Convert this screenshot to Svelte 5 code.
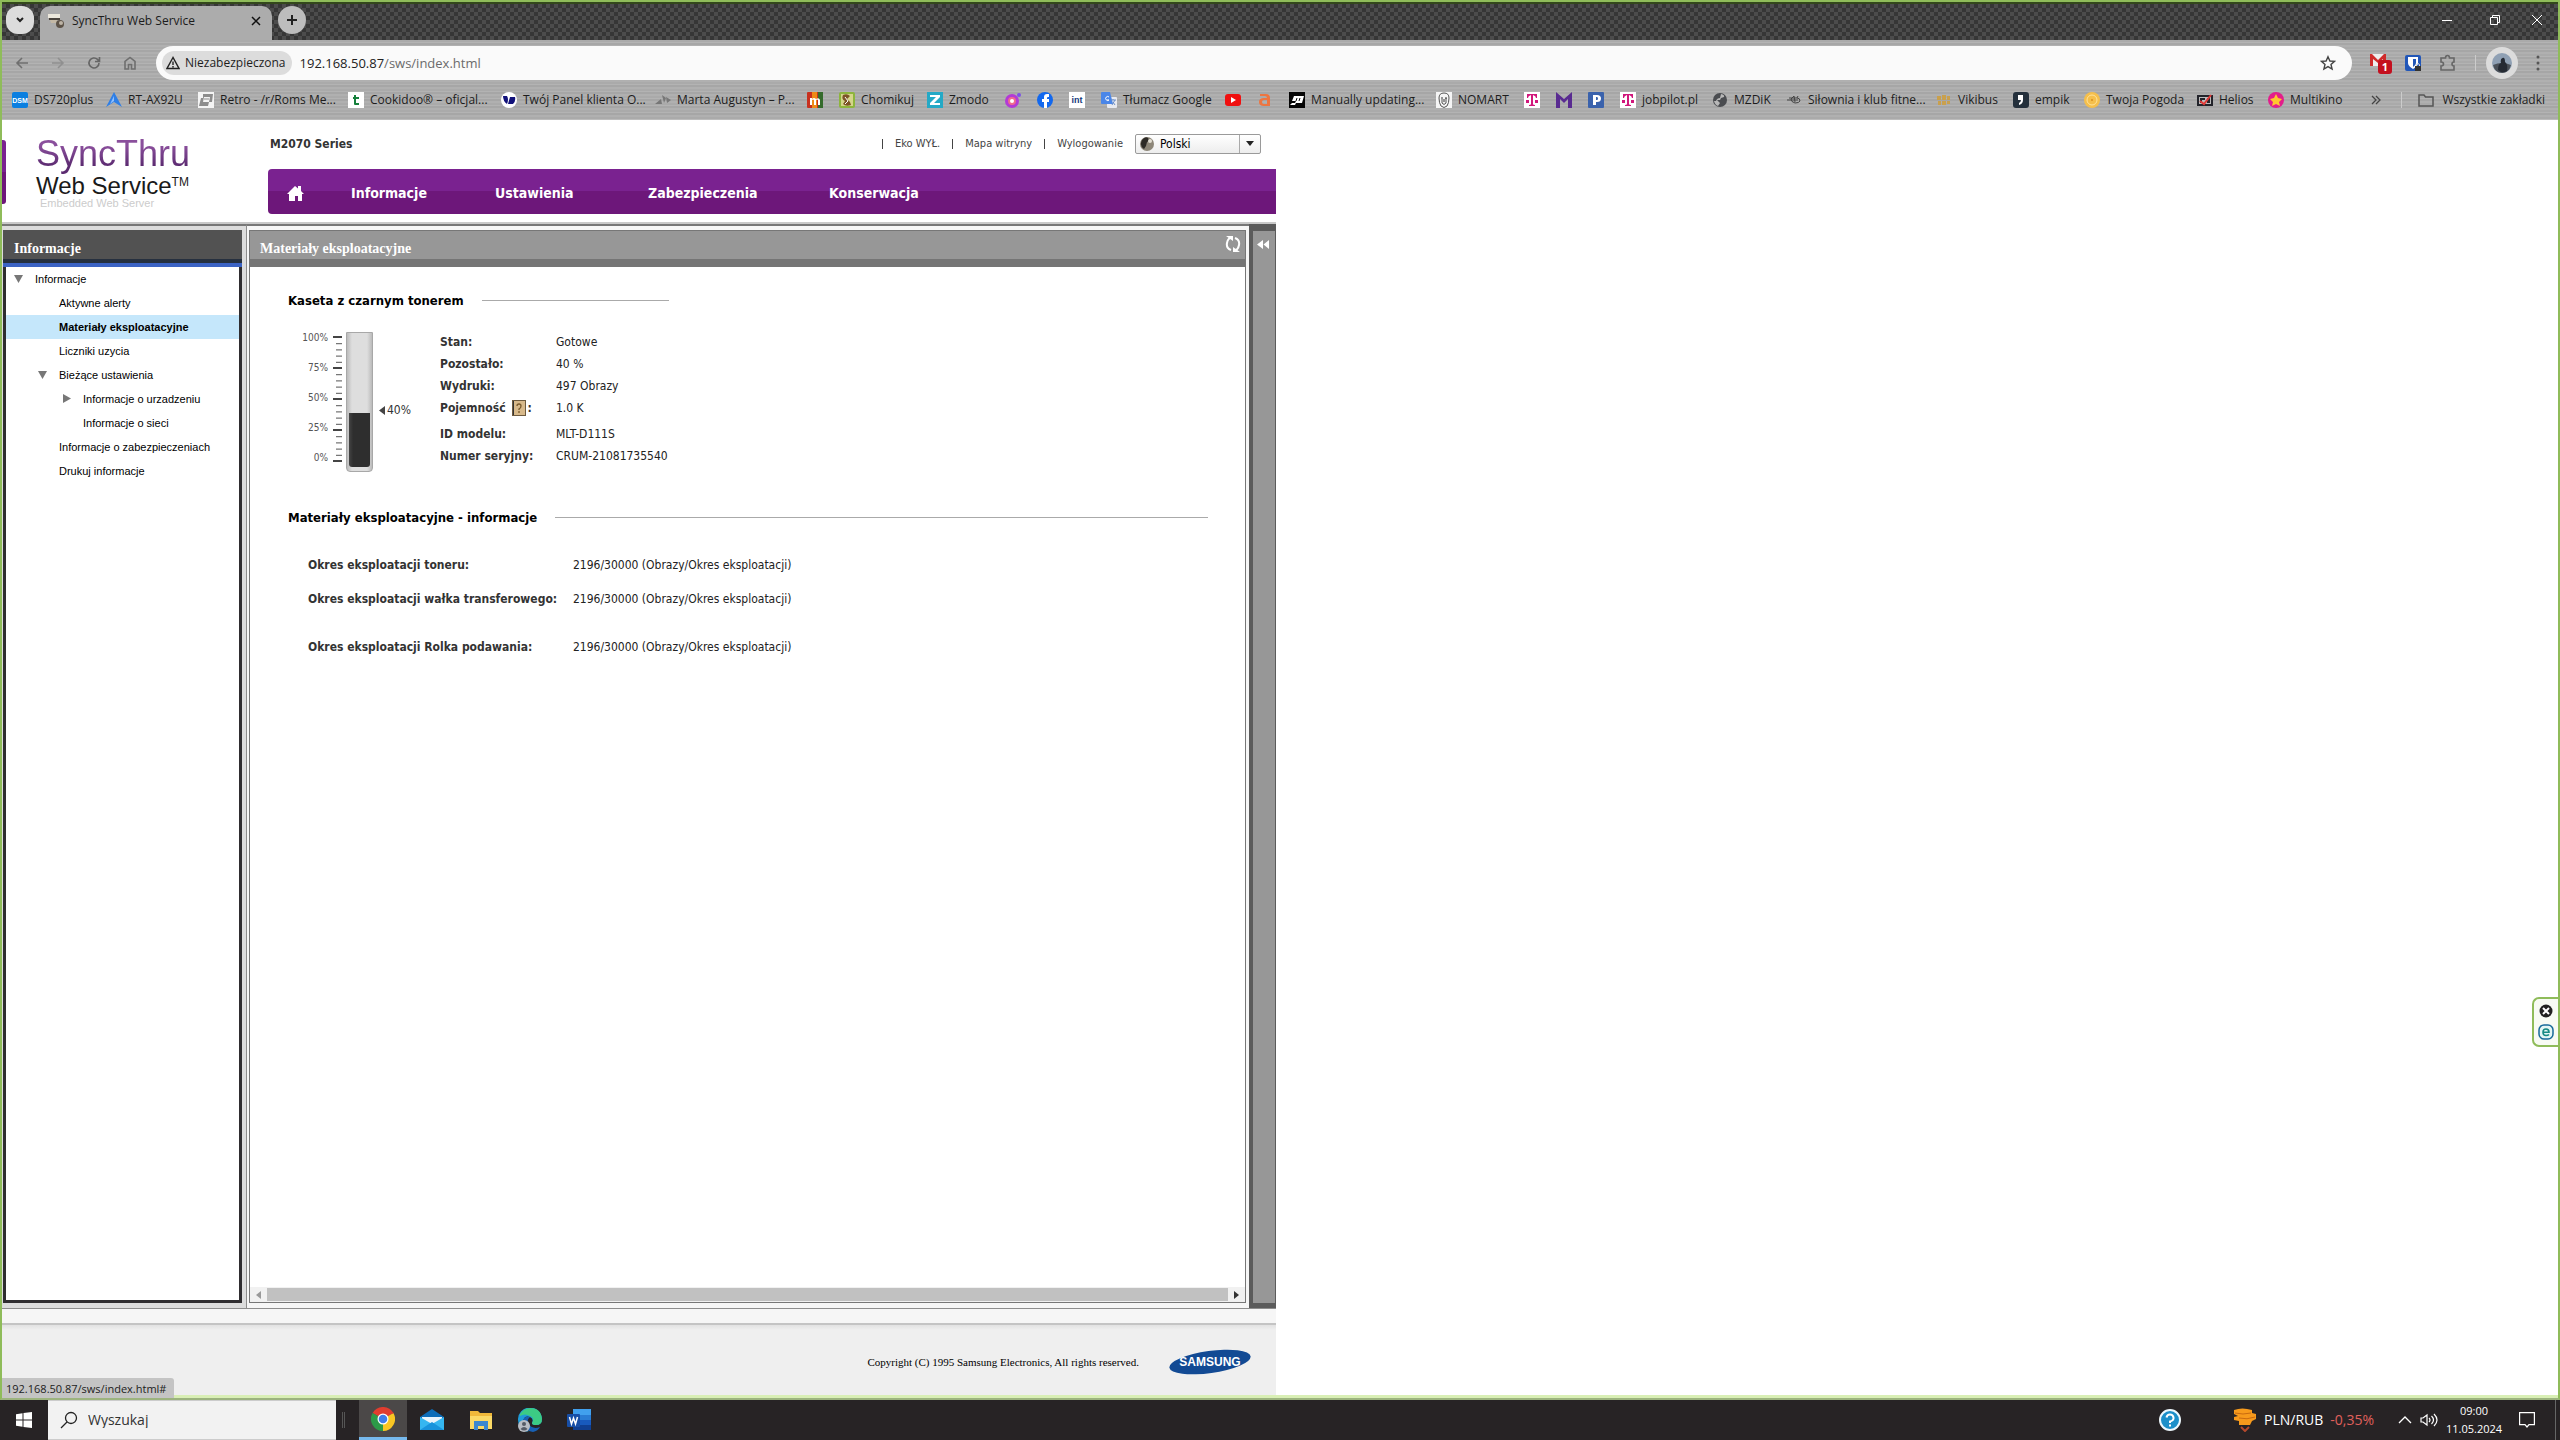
<script lang="ts">
    interface Bookmark {
        icon: string;
        label?: string;
        width?: number;
    }

    interface TreeItem {
        label: string;
        level: number;
        arrow?: "open" | "closed";
        active?: boolean;
    }

    const bookmarks: Bookmark[] = [
        { icon: "dsm", label: "DS720plus", width: 56 },
        { icon: "asus", label: "RT-AX92U", width: 54 },
        { icon: "retro", label: "Retro - /r/Roms Me...", width: 112 },
        { icon: "cookidoo", label: "Cookidoo® – oficjal...", width: 115 },
        { icon: "ovh", label: "Twój Panel klienta O...", width: 116 },
        { icon: "marta", label: "Marta Augustyn – P...", width: 114 },
        { icon: "m-red" },
        { icon: "chomik", label: "Chomikuj", width: 50 },
        { icon: "zmodo", label: "Zmodo", width: 40 },
        { icon: "insta" },
        { icon: "facebook" },
        { icon: "int" },
        { icon: "translate", label: "Tłumacz Google", width: 86 },
        { icon: "youtube" },
        { icon: "allegro" },
        { icon: "updating", label: "Manually updating...", width: 109 },
        { icon: "nomart", label: "NOMART", width: 50 },
        { icon: "telekom" },
        { icon: "m-violet" },
        { icon: "p-blue" },
        { icon: "telekom", label: "jobpilot.pl", width: 54 },
        { icon: "globe", label: "MZDiK", width: 36 },
        { icon: "gym", label: "Siłownia i klub fitne...", width: 112 },
        { icon: "vikibus", label: "Vikibus", width: 39 },
        { icon: "empik", label: "empik", width: 33 },
        { icon: "pogoda", label: "Twoja Pogoda", width: 75 },
        { icon: "helios", label: "Helios", width: 33 },
        { icon: "multikino", label: "Multikino", width: 50 },
    ];

    const tree: TreeItem[] = [
        { label: "Informacje", level: 0, arrow: "open" },
        { label: "Aktywne alerty", level: 1 },
        { label: "Materiały eksploatacyjne", level: 1, active: true },
        { label: "Liczniki uzycia", level: 1 },
        { label: "Bieżące ustawienia", level: 1, arrow: "open" },
        { label: "Informacje o urzadzeniu", level: 2, arrow: "closed" },
        { label: "Informacje o sieci", level: 2 },
        { label: "Informacje o zabezpieczeniach", level: 1 },
        { label: "Drukuj informacje", level: 1 },
    ];

    const toner = [
        { label: "Stan", value: "Gotowe" },
        { label: "Pozostało", value: "40 %" },
        { label: "Wydruki", value: "497 Obrazy" },
        { label: "Pojemność", value: "1.0 K", help: true },
        { label: "ID modelu", value: "MLT-D111S" },
        { label: "Numer seryjny", value: "CRUM-21081735540" },
    ];

    const supplies = [
        { label: "Okres eksploatacji toneru:" },
        { label: "Okres eksploatacji wałka transferowego:" },
        { label: "Okres eksploatacji Rolka podawania:", spaced: true },
    ];
    const lifespan = "2196/30000 (Obrazy/Okres eksploatacji)";

    const remaining = 40;
    const scale = [100, 75, 50, 25, 0];
    const ticks = Array.from({ length: 21 }, (_, i) => i);

    let language = $state("Polski");
    let query = $state("");
    let address = $state("192.168.50.87/sws/index.html");
</script>

{#snippet favicon(name: string)}
    <svg class="favicon" viewBox="0 0 16 16" aria-hidden="true">
        {#if name === "dsm"}
            <rect width="16" height="16" rx="2" fill="#0b7fe0" />
            <text x="8" y="11" font-size="7" font-weight="700" fill="#fff" text-anchor="middle">DSM</text>
        {:else if name === "asus"}
            <path d="M8 0 0 15l8-5 8 5z" fill="#2f7fe6" />
            <path d="M8 4 4 12l4-3z" fill="#8fc0ff" />
        {:else if name === "retro"}
            <rect width="16" height="16" fill="#f4f4f4" />
            <path d="M5 2h10l-1 8h-3l-1 4H1l2-8h2zM6 5l-1 5h6l1-5z" fill="#8d8d8d" fill-rule="evenodd" />
            <path d="M6 7h5" stroke="#8d8d8d" />
        {:else if name === "cookidoo"}
            <rect width="16" height="16" fill="#fff" />
            <path d="M6 3h2v2h3v2H8v4h3v2H7q-1 0-1-1V7H5V5h1z" fill="#16803c" />
        {:else if name === "ovh"}
            <circle cx="8" cy="8" r="8" fill="#fff" />
            <path d="M2 4h4q2 3 0 8Q2 9 2 4zM9 5h3l-3 7H7zM12 5h2q1 4-2 7h-3z" fill="#12127a" />
        {:else if name === "marta"}
            <path d="m0 12 6-5 1 5zM7 3l2 8 2-5zM11 5l5 3-4 3z" fill="#777" />
        {:else if name === "m-red"}
            <rect width="16" height="16" rx="1" fill="#c8301e" />
            <path d="M5 0h5v16H5z" fill="#ef8a16" />
            <path d="M11 0h5v16h-5z" fill="#356b2c" />
            <path d="M3 13V6h2v1q2-2 4 0 3-2 4 1v5h-2V8q-1-1-2 0v5H7V8Q6 7 5 8v5z" fill="#fff" />
        {:else if name === "chomik"}
            <rect width="16" height="16" rx="2" fill="#8db53c" />
            <path d="M2 2h12v12H2z" fill="#d4d58a" />
            <path d="M4 3q4-2 7 1l-3 3q3 2 4 6-5 2-8-1l2-3Q2 7 4 3z" fill="#7d5526" />
            <path d="m6 5 3 4-3 3" stroke="#fff" fill="none" />
        {:else if name === "zmodo"}
            <rect width="16" height="16" fill="#24a9c6" />
            <path d="M3 3h10v2l-6 6h6v2H3v-2l6-6H3z" fill="#fff" />
        {:else if name === "insta"}
            <circle cx="7" cy="9" r="7" fill="#b33ad6" />
            <circle cx="7" cy="9" r="4" fill="#f06b8e" />
            <circle cx="7" cy="9" r="2" fill="#fff" />
            <circle cx="14" cy="3" r="2" fill="#7b52e8" />
        {:else if name === "facebook"}
            <circle cx="8" cy="8" r="8" fill="#1268ee" />
            <path d="M7 16v-6H5V7h2V5q0-3 3-3h2v3h-1q-1 0-1 1v1h2v3h-2v6z" fill="#fff" />
        {:else if name === "int"}
            <rect width="16" height="16" fill="#fff" />
            <text x="8" y="11" font-size="9" font-weight="700" fill="#153a7c" text-anchor="middle">int</text>
        {:else if name === "translate"}
            <rect x="6" y="5" width="10" height="11" rx="1" fill="#e8eaf0" />
            <path d="M1 0h8l3 12H1q-1 0-1-1V1q0-1 1-1z" fill="#4a86e8" />
            <path d="M8 5a2 2 0 1 0 0 3H6" stroke="#fff" fill="none" />
            <path d="M10 8h5M12 7v1m-1 5 3-5m-2 2 2 3" stroke="#6d8fc7" fill="none" />
        {:else if name === "youtube"}
            <rect y="2" width="16" height="12" rx="3" fill="#f00f0f" />
            <path d="m6 5 5 3-5 3z" fill="#fff" />
        {:else if name === "allegro"}
            <path d="M3 2h6q4 0 4 4v8H7q-5 0-5-4t5-4h3q0-2-2-2H3zm7 6H7q-2 0-2 2t2 2h3z" fill="#ee7540" fill-rule="evenodd" />
        {:else if name === "updating"}
            <rect width="16" height="16" fill="#050505" />
            <path d="M5 4h10l-2 7H7l-1 2H1l2-2h3l1-2H3z" fill="#fff" />
            <path d="m8 6-1 3M11 6l-1 3" stroke="#050505" />
        {:else if name === "nomart"}
            <rect width="16" height="16" fill="#f5f5f5" />
            <path d="M3 6q0-5 5-5t5 5-2 8q-3 3-6 0-2-3-2-8zm3 1v4q2 3 4 0V6" fill="none" stroke="#555" />
            <path d="M5 6h2m2 0h2M8 7v3" stroke="#333" />
        {:else if name === "telekom"}
            <rect width="16" height="16" fill="#fff" />
            <path d="M3 2h10v4h-1q0-2-3-3v9q0 1 2 1v1H5v-1q2 0 2-1V3Q4 4 4 6H3zM2 8h3v3H2zM11 8h3v3h-3z" fill="#d1177c" />
        {:else if name === "m-violet"}
            <path d="M0 16V0l8 7 8-7v16h-4V7l-4 4-4-4v9z" fill="#592b91" />
        {:else if name === "p-blue"}
            <rect width="16" height="16" rx="1" fill="#3a62ac" />
            <path d="M5 13V3h4q4 0 4 3.500T9 10H8v3zm3-8v3h1q1 0 1-1.500T9 5z" fill="#fff" fill-rule="evenodd" />
        {:else if name === "globe"}
            <circle cx="8" cy="8" r="7" fill="#4a4c50" />
            <path d="M9 2q4 1 3 3l-3 1-1 2H5l3 3-2 3q-3-1-4-5h2q1-3 4-3z" fill="#b8b8b8" />
        {:else if name === "gym"}
            <path d="M1 8h11M3 6h8q3 0 3 3-1 2-5 2-4-1-4-4l3-3 1 6" fill="none" stroke="#444" />
            <path d="m11 6 1-2" stroke="#444" />
        {:else if name === "vikibus"}
            <path d="M1 4h4v4H1zM6 3h4v5H6zM11 4h3v4h-3zM2 9h3v4H2zM6 9h4v4H6zM11 9h3v3h-3z" fill="#c9a04d" />
        {:else if name === "empik"}
            <rect width="16" height="16" rx="3" fill="#24303c" />
            <path d="M5 3h5v5q0 4-4 5v-2q2-1 2-3H5z" fill="#fff" />
        {:else if name === "pogoda"}
            <circle cx="8" cy="8" r="8" fill="#f5bf4b" />
            <circle cx="8" cy="8" r="5" fill="none" stroke="#ffe39c" />
            <circle cx="8" cy="8" r="1" fill="#d98c20" />
        {:else if name === "helios"}
            <rect y="3" width="16" height="11" fill="#23242b" />
            <path d="M2 5h12v7H2z" fill="#bbb" />
            <path d="M3 6h5v2H5v3H3zM10 6h3v5h-3z" fill="#23242b" />
            <path d="m3 9 4 3 7-9" fill="none" stroke="#e23a38" stroke-width="2" />
        {:else if name === "multikino"}
            <circle cx="8" cy="8" r="8" fill="#e31d8b" />
            <path d="m8 2 2 4 4 1-3 3 1 4-4-2-4 2 1-4-3-3 4-1z" fill="#ffc72e" />
        {/if}
    </svg>
{/snippet}

<div class="screen">
    <div class="browser">
        <div class="tabstrip">
            <button class="round" aria-label="Szukaj kart">
                <svg viewBox="0 0 10 10" width="10" height="10"><path d="m2 3 3 3 3-3" fill="none" stroke="#222" stroke-width="2" /></svg>
            </button>
            <div class="tab">
                <svg viewBox="0 0 16 16" width="16" height="16" aria-hidden="true">
                    <path d="M0 1h12v4H0z" fill="#ece8dc" />
                    <path d="M1 5h11v2H1z" fill="#4a443d" />
                    <path d="M2 7h7v3H3z" fill="#c4b9a6" />
                    <circle cx="12" cy="11" r="4" fill="#5d5348" />
                    <circle cx="13" cy="10" r="2" fill="#bdb4a6" />
                </svg>
                <span class="tab-title">SyncThru Web Service</span>
                <button class="tab-close" aria-label="Zamknij kartę">
                    <svg viewBox="0 0 10 10" width="10" height="10"><path d="m1 1 8 8M9 1 1 9" stroke="#111" stroke-width="1.500" /></svg>
                </button>
            </div>
            <button class="round" aria-label="Nowa karta">
                <svg viewBox="0 0 12 12" width="12" height="12"><path d="M6 1v10M1 6h10" stroke="#222" stroke-width="2" /></svg>
            </button>
            <div class="window-buttons">
                <button aria-label="Minimalizuj"><svg viewBox="0 0 10 10" width="10" height="10"><path d="M0 5.500h10" stroke="#fff" /></svg></button>
                <button aria-label="Przywróć"><svg viewBox="0 0 10 10" width="10" height="10"><path d="M.5 2.500h7v7h-7zM2.500 2V.5h7v7H8" fill="none" stroke="#fff" /></svg></button>
                <button aria-label="Zamknij"><svg viewBox="0 0 10 10" width="10" height="10"><path d="m0 0 10 10M10 0 0 10" stroke="#fff" /></svg></button>
            </div>
        </div>

        <div class="chrome">
            <div class="toolbar">
                <div class="history">
                    <button aria-label="Wstecz"><svg viewBox="0 0 16 16" width="16" height="16"><path d="M14 8H3m5-5L3 8l5 5" fill="none" stroke="#6f6f6f" stroke-width="1.600" /></svg></button>
                    <button aria-label="Dalej"><svg viewBox="0 0 16 16" width="16" height="16"><path d="M2 8h11M8 3l5 5-5 5" fill="none" stroke="#909090" stroke-width="1.600" /></svg></button>
                    <button aria-label="Odśwież"><svg viewBox="0 0 16 16" width="16" height="16"><path d="M13 8a5 5 0 1 1-1.500-3.600L13 6M13.500 2v4.500H9" fill="none" stroke="#666" stroke-width="1.600" /></svg></button>
                    <button aria-label="Strona główna"><svg viewBox="0 0 16 16" width="16" height="16"><path d="M3 14V6.500L8 2.500l5 4V14H9.500V9.500h-3V14z" fill="none" stroke="#6f6f6f" stroke-width="1.600" /></svg></button>
                </div>
                <div class="omnibox">
                    <button class="chip">
                        <svg viewBox="0 0 14 14" width="14" height="14"><path d="M7 1.500 1 12.500h12zM7 5.500v3.500m0 1v1.500" fill="none" stroke="#222" stroke-width="1.400" /></svg>
                        Niezabezpieczona
                    </button>
                    <div class="url">
                        <span class="url-text" aria-hidden="true"><b>192.168.50.87</b>/sws/index.html</span>
                        <input aria-label="Pasek adresu" bind:value={address} />
                    </div>
                    <button class="plain" aria-label="Dodaj zakładkę">
                        <svg viewBox="0 0 16 16" width="16" height="16"><path d="m8 1.800 1.900 4.200 4.600.4-3.500 3 1.100 4.600L8 11.600 3.900 14 5 9.400l-3.500-3 4.600-.4z" fill="none" stroke="#444" stroke-width="1.400" /></svg>
                    </button>
                </div>
                <div class="extensions">
                    <button class="gmail" aria-label="Gmail">
                        <svg viewBox="0 0 22 22" width="22" height="22">
                            <path d="M0 2h16v12H0z" fill="#eee" />
                            <path d="M0 14V2h2l6 6 6-6h2v12h-3V7L8 11 3 7v7z" fill="#cf2b2b" />
                            <rect x="8" y="8" width="14" height="14" rx="3" fill="#c40f1e" />
                            <text x="15" y="19" font-size="11" font-weight="700" fill="#fff" text-anchor="middle">1</text>
                        </svg>
                    </button>
                    <button aria-label="Bitwarden">
                        <svg viewBox="0 0 16 16" width="16" height="16">
                            <rect width="16" height="16" rx="2" fill="#2257b8" />
                            <path d="M3 2h10v6q0 3-5 6-5-3-5-6z" fill="#fff" />
                            <path d="M8 4h3v4q0 2-3 4z" fill="#2257b8" />
                            <path d="M10 11h6v5h-6z" fill="#333" />
                            <path d="M11.500 11V9.500q1.500-2 3 0V11" fill="none" stroke="#ddd" />
                        </svg>
                    </button>
                    <button aria-label="Rozszerzenia">
                        <svg viewBox="0 0 18 18" width="18" height="18"><path d="M2 4h4.500q0-2.500 2-2.500t2 2.500H15v4q-2 0-2 2t2 2v4H2v-4q2.500 0 2.500-2T2 8z" fill="none" stroke="#666" stroke-width="1.600" /></svg>
                    </button>
                    <span class="bar"></span>
                    <button class="avatar" aria-label="Profil">
                        <svg viewBox="0 0 20 20" width="20" height="20">
                            <circle cx="10" cy="10" r="10" fill="#8fa0b4" />
                            <path d="M1 12q9-4 18 0-2 8-9 8t-9-8z" fill="#4a5058" />
                            <path d="M6 17q0-6 3-7-1-4 1.500-5T13 9q3 2 2 9-5 3-9-1z" fill="#252a33" />
                        </svg>
                    </button>
                    <button aria-label="Menu">
                        <svg viewBox="0 0 4 16" width="4" height="16" fill="#555"><circle cx="2" cy="2" r="1.500" /><circle cx="2" cy="8" r="1.500" /><circle cx="2" cy="14" r="1.500" /></svg>
                    </button>
                </div>
            </div>

            <div class="bookmarks">
                {#each bookmarks as mark}
                    <a class="bookmark" href="#top" aria-label={mark.label ?? mark.icon}>
                        {@render favicon(mark.icon)}
                        {#if mark.label}
                            <span style:width="{mark.width}px">{mark.label}</span>
                        {/if}
                    </a>
                {/each}
                <div class="all-bookmarks">
                    <button aria-label="Więcej zakładek">
                        <svg viewBox="0 0 10 10" width="10" height="10"><path d="m1 1 4 4-4 4M5 1l4 4-4 4" fill="none" stroke="#444" stroke-width="1.300" /></svg>
                    </button>
                    <span class="bar"></span>
                    <a class="bookmark" href="#top">
                        <svg class="favicon" viewBox="0 0 16 16"><path d="M1 3h5l1.500 2H15v9H1z" fill="none" stroke="#555" stroke-width="1.500" /></svg>
                        <span>Wszystkie zakładki</span>
                    </a>
                </div>
            </div>
        </div>

        <div class="page">
            <div class="sws">
                <header class="top">
                    <div class="brand">
                        <span class="stub"></span>
                        <div class="logo">
                            <span class="logo-name">SyncThru</span>
                            <span class="logo-service">Web Service<sup>TM</sup></span>
                            <span class="logo-sub">Embedded Web Server</span>
                        </div>
                    </div>
                    <div class="head">
                        <div class="meta">
                            <strong>M2070 Series</strong>
                            <nav class="links">
                                <a href="#eko">Eko WYŁ.</a>
                                <a href="#mapa">Mapa witryny</a>
                                <a href="#logout">Wylogowanie</a>
                            </nav>
                            <label class="language">
                                <svg viewBox="0 0 14 14" width="14" height="14" aria-hidden="true">
                                    <circle cx="7" cy="7" r="7" fill="#8d8678" />
                                    <path d="M2 3q3-4 6-2 2 3-1 4l-1 4-2 3Q-1 9 2 3z" fill="#2d2a26" />
                                    <circle cx="10" cy="4" r="2" fill="#e2ded3" />
                                </svg>
                                <select aria-label="Język" bind:value={language}>
                                    <option>Polski</option>
                                    <option>English</option>
                                </select>
                                <span class="drop"><svg viewBox="0 0 8 5" width="8" height="5"><path d="M0 0h8L4 5z" fill="#222" /></svg></span>
                            </label>
                        </div>
                        <nav class="menu">
                            <a class="home" href="#home" aria-label="Strona główna">
                                <svg viewBox="0 0 18 16" width="18" height="16"><path d="m8 1 3 2.500V1h3v5l3 3h-2v7h-4v-5H8v5H2V9H0z" fill="#fff" /></svg>
                            </a>
                            <a href="#info">Informacje</a>
                            <a href="#settings">Ustawienia</a>
                            <a class="wide" href="#security">Zabezpieczenia</a>
                            <a href="#service">Konserwacja</a>
                        </nav>
                    </div>
                </header>

                <div class="workspace">
                    <div class="side">
                        <aside class="sidebar">
                            <h2>Informacje</h2>
                            <ul>
                                {#each tree as item}
                                    <li>
                                        <a href="#tree" class="level-{item.level}" class:active={item.active}>
                                            <svg viewBox="0 0 10 10" width="10" height="10" aria-hidden="true">
                                                {#if item.arrow === "open"}
                                                    <path d="M0 1h9L4.500 9z" fill="#777" />
                                                {:else if item.arrow === "closed"}
                                                    <path d="M1 0v9l8-4.500z" fill="#777" />
                                                {/if}
                                            </svg>
                                            {item.label}
                                        </a>
                                    </li>
                                {/each}
                            </ul>
                        </aside>
                    </div>

                    <div class="center">
                        <main class="panel">
                            <div class="panel-head">
                                <h1>Materiały eksploatacyjne</h1>
                                <button aria-label="Odśwież">
                                    <svg viewBox="0 0 16 16" width="16" height="16" fill="none" stroke="#fff" stroke-width="2">
                                        <path d="M6 14Q1 12 2 7t4-5M10 2q5 2 4 7t-4 5" />
                                        <path d="M1 0h7v5zM15 16H8v-5z" fill="#fff" stroke="none" />
                                    </svg>
                                </button>
                            </div>
                            <div class="content">
                                <section class="cartridge">
                                    <h3>Kaseta z czarnym tonerem</h3>
                                    <div class="cartridge-body">
                                        <div class="gauge">
                                            <div class="scale">
                                                {#each scale as mark}
                                                    <span>{mark}%</span>
                                                {/each}
                                            </div>
                                            <svg class="ticks" viewBox="0 0 10 140" width="10" height="140" aria-hidden="true">
                                                {#each ticks as t}
                                                    {#if t % 5 === 0}
                                                        <rect x="0" y={4 + t * 6.2} width="9" height="2" fill="#444" />
                                                    {:else}
                                                        <rect x="3" y={5 + t * 6.2} width="6" height="1" fill="#555" />
                                                    {/if}
                                                {/each}
                                            </svg>
                                            <div class="tube"><div class="fill" style:height="{remaining}%"></div></div>
                                            <div class="level">
                                                <svg viewBox="0 0 6 9" width="6" height="9" aria-hidden="true"><path d="M6 0v9L0 4.500z" fill="#444" /></svg>
                                                {remaining}%
                                            </div>
                                        </div>
                                        <table class="facts">
                                            <tbody>
                                                {#each toner as row}
                                                    <tr class:tall={row.help}>
                                                        <th scope="row">
                                                            {row.label}{#if row.help}<svg class="help" viewBox="0 0 14 16" width="14" height="16" aria-hidden="true">
                                                                    <rect x="0.500" y="0.500" width="13" height="15" fill="#d8b98a" stroke="#6e5a3e" />
                                                                    <path d="M5 6q0-2 2-2t2 2-2 3v1m0 1v2" fill="none" stroke="#7a5a2c" stroke-width="1.300" />
                                                                    <path d="M1 1h1v14H1z" fill="#333" />
                                                                </svg>{/if}:
                                                        </th>
                                                        <td>{row.value}</td>
                                                    </tr>
                                                {/each}
                                            </tbody>
                                        </table>
                                    </div>
                                </section>

                                <section>
                                    <h3>Materiały eksploatacyjne - informacje</h3>
                                    <table class="supplies">
                                        <tbody>
                                            {#each supplies as row}
                                                <tr class:spaced={row.spaced}>
                                                    <th scope="row">{row.label}</th>
                                                    <td>{lifespan}</td>
                                                </tr>
                                            {/each}
                                        </tbody>
                                    </table>
                                </section>
                            </div>
                            <div class="scrollbar">
                                <svg viewBox="0 0 5 8" width="5" height="8"><path d="M5 0v8L0 4z" fill="#999" /></svg>
                                <span class="thumb"></span>
                                <svg viewBox="0 0 5 8" width="5" height="8"><path d="M0 0v8l5-4z" fill="#333" /></svg>
                            </div>
                        </main>
                    </div>

                    <div class="rail">
                        <button aria-label="Rozwiń panel">
                            <svg viewBox="0 0 12 9" width="12" height="9"><path d="M6 0v9L0 4.500zM12 0v9L6.500 4.500z" fill="#fff" /></svg>
                        </button>
                    </div>
                </div>

                <div class="gap"></div>
                <footer>
                    <span>Copyright (C) 1995 Samsung Electronics, All rights reserved.</span>
                    <svg viewBox="0 0 82 28" width="82" height="28" role="img" aria-label="Samsung">
                        <ellipse cx="41" cy="14" rx="41" ry="11" fill="#124a94" transform="rotate(-8 41 14)" />
                        <text x="41" y="18" font-size="12" font-weight="700" fill="#fff" text-anchor="middle">SAMSUNG</text>
                    </svg>
                </footer>
            </div>

            <div class="status">192.168.50.87/sws/index.html#</div>
            <div class="dock">
                <button aria-label="Zamknij">
                    <svg viewBox="0 0 14 14" width="14" height="14"><circle cx="7" cy="7" r="6.500" fill="#222" /><path d="m4 4 6 6m0-6-6 6" stroke="#fff" stroke-width="2" /></svg>
                </button>
                <button aria-label="ESET">
                    <svg viewBox="0 0 16 16" width="16" height="16"><rect x="1" y="1" width="14" height="14" rx="5" fill="#e4f6f5" stroke="#176a9a" stroke-width="1.500" /><path d="M4.500 8.300H11Q11 5 8 5T5 8.200Q5 11.500 8 11.500q2 0 3-1" fill="none" stroke="#178a84" stroke-width="1.600" /></svg>
                </button>
            </div>
        </div>
    </div>

    <div class="taskbar">
        <button class="start" aria-label="Start">
            <svg viewBox="0 0 16 16" width="16" height="16"><path d="M0 2.200 6.500 1.300v6.200H0zM7.500 1.100 16 0v7.500H7.500zM0 8.500h6.500v6.200L0 13.800zM7.500 8.500H16V16l-8.500-1.100z" fill="#fff" /></svg>
        </button>
        <label class="search">
            <svg viewBox="0 0 18 18" width="18" height="18"><circle cx="11" cy="7" r="5.500" fill="none" stroke="#222" stroke-width="1.300" /><path d="m7 11-6 6" stroke="#222" stroke-width="1.300" /></svg>
            <input placeholder="Wyszukaj" aria-label="Wyszukaj" bind:value={query} />
        </label>
        <span class="grip"></span>
        <button class="app running" aria-label="Chrome">
            <svg viewBox="0 0 24 24" width="24" height="24">
                <path d="M12 12 1.600 6A12 12 0 0 1 22.400 6z" fill="#e03d2f" />
                <path d="M12 12 22.400 6A12 12 0 0 1 12 24z" fill="#f9c623" />
                <path d="M12 12v12A12 12 0 0 1 1.600 6z" fill="#2c9a48" />
                <path d="M12 6.500h10.600L22 5H8z" fill="#e03d2f" />
                <circle cx="12" cy="12" r="5.500" fill="#fff" />
                <circle cx="12" cy="12" r="4.300" fill="#3f7de8" />
            </svg>
        </button>
        <button class="app" aria-label="Poczta">
            <svg viewBox="0 0 24 24" width="24" height="24">
                <path d="M0 9 12 1l12 8v13H0z" fill="#0c6cb8" />
                <path d="M2 9h20v7H2z" fill="#e9f4fc" />
                <path d="M0 9v13h24V9L12 16z" fill="#35b6f0" />
                <path d="M0 22 12 14l12 8z" fill="#1893dc" />
            </svg>
        </button>
        <button class="app" aria-label="Eksplorator plików">
            <svg viewBox="0 0 24 24" width="24" height="24">
                <path d="M1 3h8l2 2h12v16H1z" fill="#f0b83a" />
                <path d="M1 8h22v13H1z" fill="#fbd966" />
                <path d="M5 13h14v9h-4v-4H9v4H5z" fill="#3c87cf" />
            </svg>
        </button>
        <button class="app" aria-label="Edge">
            <svg viewBox="0 0 24 24" width="24" height="24">
                <path d="M0 12A12 12 0 0 1 24 11q0 6-6 6-4 0-4-2 2-4-2-6-6-2-7 5-1 7 6 10Q0 22 0 12z" fill="#1f9bd8" />
                <path d="M2 6Q6 0 12 0q11 0 12 11 0 6-6 6-4 0-4-2 3-5-2-7Q7 5 2 8z" fill="#3ccb84" />
                <path d="M5 14q1 9 10 10 5-1 7-5-8 3-12-4-1-4 2-6-7-1-7 5z" fill="#1860b4" />
                <circle cx="6" cy="18" r="6" fill="#b9bdc4" />
                <circle cx="6" cy="16" r="2" fill="#555b66" />
                <path d="M2.500 21q3.500-4 7 0-3.500 3-7 0z" fill="#555b66" />
            </svg>
        </button>
        <button class="app" aria-label="Word">
            <svg viewBox="0 0 24 24" width="24" height="24">
                <path d="M6 1h18v6H6z" fill="#41a0ee" />
                <path d="M6 7h18v5H6z" fill="#2a7cd4" />
                <path d="M6 12h18v5H6z" fill="#185abd" />
                <path d="M6 17h18v5H6z" fill="#103f91" />
                <rect y="6" width="13" height="13" rx="1" fill="#174ea6" />
                <path d="m2.500 9 2 7 2-6 2 6 2-7" fill="none" stroke="#fff" stroke-width="1.500" />
            </svg>
        </button>
        <div class="tray">
            <button class="tray-help" aria-label="Pomoc">
                <svg viewBox="0 0 22 22" width="22" height="22"><circle cx="11" cy="11" r="10" fill="#1c8fc9" stroke="#eef8fd" stroke-width="2" /><path d="M7.500 8.500Q8 5.500 11 5.500t3.500 3-3.500 4V14m0 1.500v2" fill="none" stroke="#fff" stroke-width="2" /></svg>
            </button>
            <button class="rates">
                <svg viewBox="0 0 24 24" width="24" height="24"><path d="M1 2q8-3 18 0v3l4 1v5l-4 2-2 4H6v-4l-5-1v-3l4-1-4-2z" fill="#f79a1c" /><path d="M2 5q8 2 16 0M6 10q8 2 16-1" fill="none" stroke="#c96a10" /><path d="m8 19 4 4 4-4" fill="none" stroke="#b4482c" stroke-width="2" /></svg>
                <span>PLN/RUB</span>
                <span class="drop-rate">-0,35%</span>
            </button>
            <button class="chevron" aria-label="Pokaż ukryte ikony">
                <svg viewBox="0 0 14 8" width="14" height="8"><path d="m1 7 6-6 6 6" fill="none" stroke="#fff" stroke-width="1.300" /></svg>
            </button>
            <button aria-label="Głośność">
                <svg viewBox="0 0 18 14" width="18" height="14"><path d="M1 5h2l4-3v10L3 9H1zM9 5q2 2 0 4M11.500 3q4 4 0 8M14 1q6 6 0 12" fill="none" stroke="#fff" stroke-width="1.200" /></svg>
            </button>
            <button class="clock"><span>09:00</span><span>11.05.2024</span></button>
            <button class="notes" aria-label="Powiadomienia">
                <svg viewBox="0 0 16 16" width="16" height="16"><path d="M.6.600h14.800v12H10L8 15l-2-2.400H.6z" fill="none" stroke="#fff" stroke-width="1.200" /></svg>
            </button>
            <span class="desktop-edge"></span>
        </div>
    </div>
</div>

<style>
    :global(body) {
        margin: 0;
        background: #fff;
    }

    .screen {
        --ui: "Open Sans", "Segoe UI", sans-serif;
        --page: "DejaVu Sans Condensed", Tahoma, "Noto Sans", sans-serif;
        --tree: "Liberation Sans", Arial, sans-serif;
        --serif: "Liberation Serif", "Times New Roman", serif;
        min-height: 100vh;
        display: flex;
        flex-direction: column;
        font-family: var(--ui);
        font-size: 12px;
        line-height: 16px;
        color: #1c1c1c;
    }

    .screen * {
        box-sizing: border-box;
    }

    button,
    input,
    select {
        margin: 0;
        padding: 0;
        border: 0;
        background: none;
        font: inherit;
        color: inherit;
        outline: none;
    }

    a {
        color: inherit;
        text-decoration: none;
    }

    svg {
        display: block;
        flex: none;
    }

    h1, h2, h3, ul {
        margin: 0;
        padding: 0;
    }

    .browser {
        flex: 1;
        display: flex;
        flex-direction: column;
        border: 2px solid #8fbc5a;
        border-bottom-color: #9cb37e;
    }

    /* window frame */
    .tabstrip {
        display: flex;
        height: 38px;
        padding: 2px 2px 0 4px;
        border-top: 2px solid #33471c;
        background: repeating-conic-gradient(#363636 0 25%, #4c4c4c 0 50%) 0 0 / 8px 8px;
    }

    .round {
        width: 28px;
        height: 28px;
        display: flex;
        align-items: center;
        justify-content: center;
        border-radius: 12px;
        background: #dcdcdc;
    }

    .tab {
        display: flex;
        align-items: center;
        width: 232px;
        height: 34px;
        margin: 0 6px;
        padding: 0 11px 5px 8px;
        border-radius: 10px 10px 0 0;
        background: #acacac;
    }

    .tab-title {
        flex: 1;
        padding-left: 8px;
    }

    .tab + .round {
        border-radius: 14px;
        background: #bdbdbd;
    }

    .window-buttons {
        display: flex;
        margin-left: auto;
    }

    .window-buttons button {
        width: 46px;
        height: 28px;
        display: flex;
        align-items: center;
        justify-content: center;
    }

    .window-buttons button:last-child {
        width: 38px;
    }

    .window-buttons button:first-child {
        margin-right: 2px;
    }

    .chrome {
        height: 80px;
        background: repeating-linear-gradient(#aaa 0 2px, #b3b3b3 2px 3px, #a6a6a6 3px 5px, #b0b0b0 5px 7px);
        border-bottom: 1px solid #bbb;
    }

    .toolbar {
        display: flex;
        align-items: center;
        height: 46px;
        padding: 0 18px 0 12px;
    }

    .history {
        display: flex;
        gap: 20px;
        width: 142px;
    }

    .omnibox {
        flex: 1;
        display: flex;
        align-items: center;
        height: 34px;
        padding: 0 16px 0 6px;
        border-radius: 17px;
        background: #fafafa;
    }

    .chip {
        display: flex;
        align-items: center;
        gap: 5px;
        height: 24px;
        padding: 0 6px 0 4px;
        border-radius: 12px;
        background: #dcdcdc;
    }

    .url {
        flex: 1;
        display: grid;
        margin-left: 8px;
        font-size: 13px;
        line-height: 20px;
        color: #6b6b6b;
    }

    .url-text,
    .url input {
        grid-area: 1 / 1;
    }

    .url b {
        font-weight: 400;
        color: #222;
    }

    .url input {
        color: transparent;
    }

    .extensions {
        display: flex;
        align-items: center;
        gap: 18px;
        padding-left: 18px;
    }

    .gmail {
        margin-right: -5px;
    }

    .bar {
        width: 1px;
        height: 16px;
        background: #ccc;
    }

    .avatar {
        width: 32px;
        height: 32px;
        display: flex;
        align-items: center;
        justify-content: center;
        margin-left: -8px;
        border-radius: 50%;
        background: #dcdcdc;
    }

    .bookmarks {
        display: flex;
        align-items: center;
        gap: 16px;
        height: 28px;
        padding: 0 13px 0 10px;
        white-space: nowrap;
    }

    .bookmark {
        display: flex;
        align-items: center;
        gap: 6px;
    }

    .favicon {
        width: 16px;
        height: 16px;
        font-family: var(--tree);
    }

    .all-bookmarks {
        display: flex;
        align-items: center;
        gap: 16px;
        margin-left: auto;
    }

    .all-bookmarks .bar {
        margin-left: 4px;
    }

    .all-bookmarks .bookmark {
        gap: 8px;
    }

    /* page */
    .page {
        position: relative;
        flex: 1;
        display: flex;
        background: #fff;
        border-bottom: 3px solid #d9efb5;
    }

    .sws {
        width: calc(50% - 4px);
        display: flex;
        flex-direction: column;
        font-family: var(--page);
    }

    .top {
        display: grid;
        grid-template-columns: 266px 1fr;
        height: 102px;
    }

    .brand {
        display: flex;
    }

    .stub {
        width: 4px;
        height: 64px;
        margin-top: 20px;
        border-radius: 0 3px 3px 0;
        background: linear-gradient(#7a2290 50%, #6d177a 50%);
    }

    .logo {
        display: flex;
        flex-direction: column;
        padding: 14px 0 0 30px;
        font-family: var(--tree);
    }

    .logo-name {
        font-size: 36px;
        line-height: 40px;
        color: transparent;
        background: linear-gradient(#8a4f9c 30%, #5b2a70 80%);
        background-clip: text;
    }

    .logo-service {
        font-size: 24px;
        line-height: 24px;
        color: #1a1a1a;
    }

    .logo-service sup {
        font-size: 12px;
        line-height: 12px;
        vertical-align: 8px;
    }

    .logo-sub {
        padding-left: 4px;
        font-size: 11px;
        line-height: 11px;
        color: #ccc;
    }

    .meta {
        display: flex;
        align-items: center;
        height: 49px;
        padding: 0 15px 2px 2px;
        font-size: 12px;
        color: #333;
    }

    .links {
        display: flex;
        margin-left: auto;
        font-size: 11px;
        color: #444;
    }

    .links a {
        display: flex;
        align-items: center;
        padding-right: 12px;
    }

    .links a::before {
        content: "";
        width: 1px;
        height: 10px;
        margin-right: 12px;
        background: #444;
    }

    .language {
        display: flex;
        align-items: center;
        width: 126px;
        height: 20px;
        padding-left: 4px;
        border: 1px solid #9a9a9a;
        border-radius: 2px;
        background: linear-gradient(#fff, #ededed);
        color: #000;
    }

    .language select {
        flex: 1;
        appearance: none;
        padding-left: 6px;
        font-size: 12px;
    }

    .drop {
        display: flex;
        align-items: center;
        justify-content: center;
        width: 21px;
        height: 18px;
        border-left: 1px solid #aaa;
    }

    .menu {
        display: flex;
        align-items: center;
        height: 45px;
        padding: 2px 0 0 19px;
        border-radius: 4px 0 0 4px;
        background: linear-gradient(#7a2290 50%, #6d177a 50%);
        font-size: 14px;
        line-height: 20px;
        font-weight: 700;
        color: #fff;
    }

    .menu a {
        width: 144px;
    }

    .menu .home {
        width: 64px;
    }

    .menu a + a + a {
        width: 153px;
    }

    .menu .wide.wide.wide {
        width: 181px;
    }

    .workspace {
        flex: 1;
        display: grid;
        grid-template-columns: 245px 1fr 27px;
        border-top: 2px solid #c9c9c9;
        border-bottom: 1px solid #8d8d8d;
    }

    .side,
    .center {
        display: flex;
        border-top: 2px solid #777;
    }

    .side {
        padding: 4px 4px 5px 1px;
        border-right: 1px solid #8d8d8d;
        background: #dcdcdc;
    }

    .sidebar {
        flex: 1;
        border: 3px solid #2f2d30;
        border-top: 0;
        background: #fff;
    }

    .sidebar h2 {
        height: 37px;
        margin: 0 -3px;
        padding: 9px 11px 0;
        border-bottom: 4px solid #3c63c4;
        background: linear-gradient(#525252 29px, #26303f 29px);
        font-family: var(--serif);
        font-size: 14px;
        line-height: 20px;
        color: #fff;
    }

    .sidebar ul {
        list-style: none;
        font-family: var(--tree);
        font-size: 11px;
    }

    .sidebar a {
        display: flex;
        align-items: center;
        gap: 11px;
        height: 24px;
        color: #000;
    }

    .level-0 {
        padding-left: 8px;
    }

    .level-1 {
        padding-left: 32px;
    }

    .level-2 {
        padding-left: 56px;
    }

    .sidebar .active {
        background: #c5e7fb;
        font-weight: 700;
    }

    .center {
        padding: 4px 3px 5px 2px;
        background: #f6f6f6;
    }

    .panel {
        flex: 1;
        display: flex;
        flex-direction: column;
        border: 1px solid #777;
        background: #fff;
    }

    .panel-head {
        display: flex;
        justify-content: space-between;
        height: 36px;
        padding: 8px 4px 0 10px;
        border-bottom: 8px solid #757575;
        background: #979797;
    }

    .panel-head h1 {
        font-family: var(--serif);
        font-size: 14px;
        line-height: 20px;
        color: #fff;
    }

    .panel-head button {
        height: 16px;
        margin-top: -3px;
    }

    .content {
        flex: 1;
        padding: 21px 37px 22px 38px;
        color: #000;
    }

    h3 {
        display: flex;
        align-items: center;
        gap: 18px;
        font-size: 13px;
        line-height: 25px;
    }

    h3::after {
        content: "";
        flex: 1;
        height: 1px;
        background: #aaa;
    }

    .cartridge {
        max-width: 381px;
        margin-bottom: 32px;
    }

    .cartridge-body {
        display: flex;
        height: 150px;
        margin-top: 10px;
    }

    .gauge {
        display: flex;
        width: 152px;
        flex: none;
    }

    .scale {
        display: flex;
        flex-direction: column;
        width: 40px;
        margin-right: 5px;
        text-align: right;
        font-size: 10px;
        line-height: 30px;
        color: #555;
    }

    .ticks {
        margin: 9px 3px 0 0;
    }

    .tube {
        display: flex;
        flex-direction: column;
        justify-content: flex-end;
        width: 27px;
        height: 140px;
        margin-top: 9px;
        padding: 0 2px 4px;
        border: 1px solid #a8a8a8;
        border-radius: 0 0 4px 4px;
        background: linear-gradient(90deg, #bbb, #dedede 20%, #dedede 80%, #bbb);
    }

    .fill {
        border-radius: 0 0 3px 3px;
        background: linear-gradient(90deg, #444, #2e2e2e 20%);
    }

    .level {
        display: flex;
        align-items: center;
        gap: 2px;
        height: 16px;
        margin: 79px 0 0 6px;
        font-size: 12px;
        color: #333;
    }

    table {
        border-collapse: collapse;
        font-size: 12px;
    }

    th,
    td {
        padding: 0;
        text-align: left;
        vertical-align: top;
        white-space: nowrap;
    }

    th {
        color: #333;
    }

    td {
        color: #222;
    }

    .facts {
        align-self: flex-start;
        margin-top: 8px;
        line-height: 22px;
    }

    .facts th {
        width: 116px;
    }

    .facts .tall {
        height: 26px;
    }

    .help {
        display: inline-block;
        margin: 0 2px 0 6px;
        vertical-align: -4px;
    }

    .supplies {
        margin: 18px 0 0 20px;
        line-height: 34px;
    }

    .supplies th {
        width: 265px;
    }

    .spaced th,
    .spaced td {
        padding-top: 14px;
    }

    .scrollbar {
        display: flex;
        align-items: center;
        gap: 6px;
        height: 15px;
        padding: 0 6px;
        background: #f1f1f1;
    }

    .scrollbar .thumb {
        flex: 1;
        height: 13px;
        background: #c1c1c1;
    }

    .rail {
        border: 4px solid #5b5b5b;
        border-width: 7px 1px 5px 4px;
        background: #979797;
    }

    .rail button {
        display: block;
        margin: 9px 0 0 4px;
    }

    .gap {
        height: 14px;
        background: #f6f6f6;
    }

    footer {
        display: flex;
        align-items: center;
        justify-content: flex-end;
        gap: 30px;
        height: 72px;
        padding: 4px 25px 0 0;
        border-top: 2px solid #c4c4c4;
        background: linear-gradient(#e2e2e2, #efefef 5px);
        font-family: var(--serif);
        font-size: 11px;
        color: #000;
    }

    footer svg {
        font-family: var(--tree);
    }

    .status {
        position: absolute;
        left: 0;
        bottom: -3px;
        height: 20px;
        padding: 0 8px 0 4px;
        border-radius: 0 3px 0 0;
        background: #c4c4c4;
        font-size: 11px;
        line-height: 22px;
    }

    .dock {
        position: absolute;
        top: 877px;
        right: 0;
        display: flex;
        flex-direction: column;
        align-items: center;
        justify-content: center;
        gap: 6px;
        width: 26px;
        height: 50px;
        border: 2px solid #8fbc5a;
        border-right: 0;
        border-radius: 7px 0 0 7px;
        background: #f8fbf4;
    }

    /* taskbar */
    .taskbar {
        display: flex;
        height: 40px;
        background: #272325;
        color: #fff;
    }

    .start,
    .app {
        width: 48px;
        display: flex;
        align-items: center;
        justify-content: center;
    }

    .app + .app {
        margin-left: 1px;
    }

    .search {
        display: flex;
        align-items: center;
        gap: 10px;
        width: 288px;
        padding-left: 12px;
        border: 1px solid #ccc;
        border-width: 1px 0;
        background: #f2f2f2;
        color: #222;
        font-size: 14px;
    }

    .search input {
        flex: 1;
        min-width: 0;
    }

    .search input::placeholder {
        color: #333;
        opacity: 1;
    }

    .grip {
        width: 3px;
        height: 16px;
        margin: 12px 14px 0 6px;
        border: 1px solid #555;
        border-width: 0 1px;
    }

    .running {
        border-bottom: 3px solid #76b9ed;
        background: #4b4848;
    }

    .tray {
        display: flex;
        align-items: center;
        margin-left: auto;
    }

    .tray-help {
        margin-right: 52px;
    }

    .rates {
        display: flex;
        align-items: center;
        gap: 7px;
        margin-right: 24px;
        font-size: 14px;
    }

    .drop-rate {
        color: #e0605c;
    }

    .chevron {
        margin-right: 8px;
    }

    .clock {
        display: flex;
        flex-direction: column;
        align-items: center;
        width: 54px;
        margin: 0 18px 0 9px;
        font-size: 11px;
        line-height: 18px;
        white-space: nowrap;
    }

    .notes {
        margin-right: 20px;
    }

    .desktop-edge {
        width: 5px;
        height: 40px;
        border-left: 1px solid #666;
    }
</style>
